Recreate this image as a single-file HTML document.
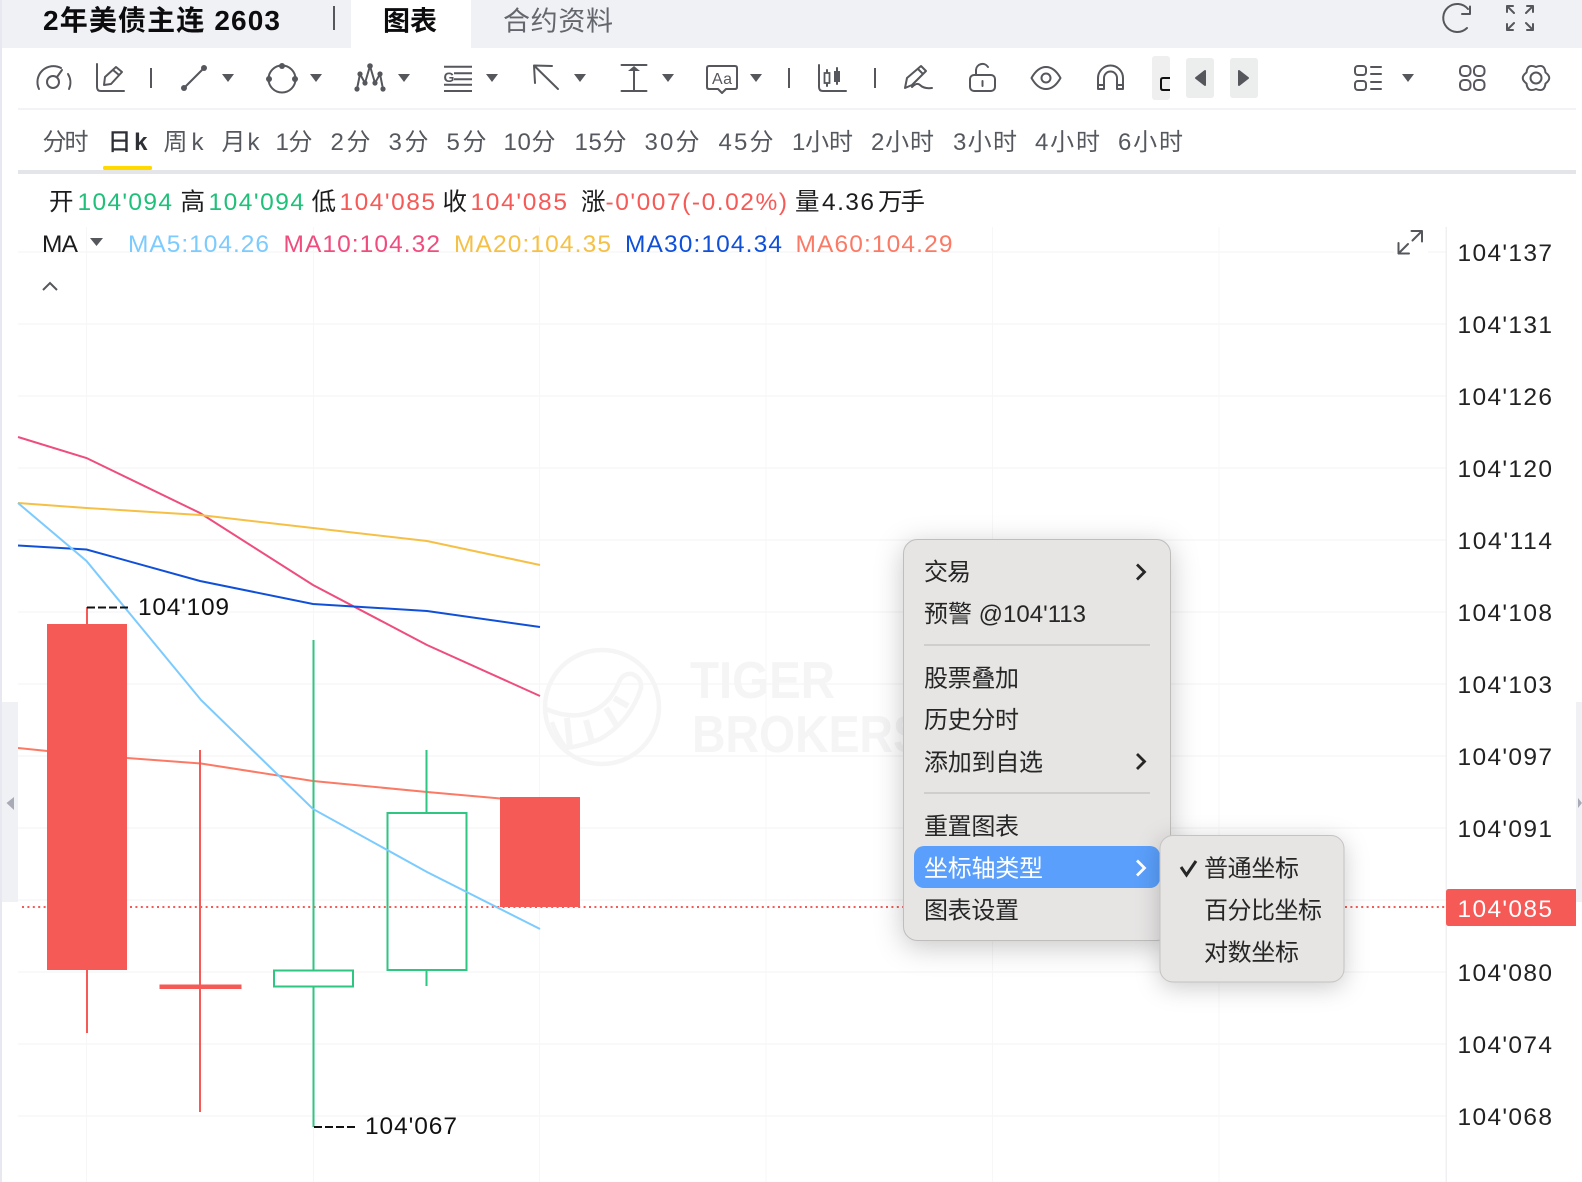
<!DOCTYPE html>
<html><head><meta charset="utf-8"><style>
html,body{margin:0;padding:0;background:#fff;width:1582px;height:1182px;overflow:hidden}
svg{display:block;position:absolute;left:0;top:0}
text{font-family:"Liberation Sans","Noto Sans CJK SC",sans-serif;font-size:24.5px;fill:#1c1c1e;white-space:pre}
.ic{fill:none;stroke:#55575c;stroke-width:2;stroke-linecap:round;stroke-linejoin:round}
.fl{fill:#55575c;stroke:none}
.p{fill:#55585e;font-size:24px}
.g{fill:#20c07a}.r{fill:#f55a57}
.ax{fill:#222}
.m{fill:#262626;font-size:24px}
</style></head><body>
<svg width="1582" height="1182" viewBox="0 0 1582 1182" xmlns="http://www.w3.org/2000/svg">
<rect width="1582" height="1182" fill="#fff"/>
<rect x="0" y="0" width="2" height="1182" fill="#e8e9f0"/>
<!-- tab bar -->
<rect x="2" y="0" width="1580" height="48" fill="#f0f1f5"/>
<rect x="351" y="0" width="120" height="48" fill="#fff"/>
<text x="43" y="30" font-weight="700" style="font-size:28px;fill:#0c0c0e" textLength="237">2年美债主连 2603</text>
<rect x="333" y="6" width="2" height="24" fill="#55575c"/>
<text x="383" y="30.500" font-weight="700" style="font-size:27px;fill:#0c0c0e" textLength="54">图表</text>
<text x="503" y="30.500" style="font-size:27px;fill:#63666c" textLength="110">合约资料</text>
<path class="ic" d="M1468 9A14 14 0 1 0 1467 28"/>
<path class="ic" d="M1470 6.500V14H1462"/>
<path class="ic" d="M1507 6V12M1507 6H1513M1507 6L1514 13M1533 6V12M1533 6H1527M1533 6L1526 13M1507 30V24M1507 30H1513M1507 30L1514 23M1533 30V24M1533 30H1527M1533 30L1526 23"/>
<!-- toolbar -->
<path class="ic" d="M39 89A16 16 0 0 1 61 68M68 74A16 16 0 0 1 69 89"/>
<circle class="ic" cx="53" cy="82" r="6"/>
<path class="ic" d="M57 77L62 70"/>
<path class="ic" d="M97 64V87Q97 91 101 91H124"/>
<path class="ic" d="M104 85L105 77L116 67L122 72L111 84Z M113 70L119 75"/>
<rect x="150" y="68" width="2" height="20" fill="#55575c"/>
<path class="ic" d="M184 88L204 68"/><circle class="fl" cx="184" cy="88" r="3"/><circle class="fl" cx="204" cy="68" r="3"/>
<path class="fl" d="M222 74H234L228 82Z"/>
<circle class="ic" cx="282" cy="79" r="13.500"/><circle class="fl" cx="282" cy="66" r="3"/><circle class="fl" cx="269" cy="79" r="3"/><circle class="fl" cx="295" cy="79" r="3"/>
<path class="fl" d="M310 74H322L316 82Z"/>
<path class="ic" d="M357 89L360 74L365 83L370 66L375 83L380 74L383 89"/>
<circle class="fl" cx="357" cy="89" r="2.600"/><circle class="fl" cx="360" cy="74" r="2.600"/><circle class="fl" cx="365" cy="83" r="2.600"/><circle class="fl" cx="370" cy="66" r="2.800"/><circle class="fl" cx="375" cy="83" r="2.600"/><circle class="fl" cx="380" cy="74" r="2.600"/><circle class="fl" cx="383" cy="89" r="2.600"/>
<path class="fl" d="M398 74H410L404 82Z"/>
<path d="M444 66.700H472M454 73.300H472M454 79.300H472M444 84.700H472M444 91H472" fill="none" stroke="#55575c" stroke-width="2"/>
<text x="443.500" y="82" style="font-size:14px;fill:#55575c" font-weight="700">G</text>
<path class="fl" d="M486 74H498L492 82Z"/>
<path class="ic" d="M552 66L534 65.500L535 83M534.500 66L558 89"/>
<path class="fl" d="M574 74H586L580 82Z"/>
<path class="ic" d="M621.500 65H646.500M621.500 91H646.500M634 70V91"/>
<path class="fl" d="M628 71L634 66L640 71Z"/>
<path class="fl" d="M662 74H674L668 82Z"/>
<path class="ic" d="M709 66H735Q737 66 737 68V87Q737 89 735 89H726L722 93L718 89H709Q707 89 707 87V68Q707 66 709 66Z"/>
<text x="712" y="84" style="font-size:16px;fill:#55575c" textLength="20">Aa</text>
<path class="fl" d="M750 74H762L756 82Z"/>
<rect x="788" y="68" width="2" height="20" fill="#55575c"/>
<path class="ic" d="M819 65V87Q819 91 823 91H846"/>
<path class="ic" d="M827 70V86"/><rect x="824.500" y="73" width="5" height="10" fill="#fff" stroke="#55575c" stroke-width="1.800"/>
<path class="ic" d="M837 68V84"/><rect x="834" y="71" width="6" height="11" fill="#55575c"/>
<rect x="874" y="68" width="2" height="20" fill="#55575c"/>
<path class="ic" d="M905 88L907 78L921 66L926 71L912 85ZM918 69L923 74"/>
<path class="ic" d="M912 87Q917 82 920 85Q924 89 932 88"/>
<rect class="ic" x="970" y="75" width="25" height="16" rx="4"/>
<path class="ic" d="M976 75V70A6.500 6.500 0 0 1 988 67M982.500 81V86"/>
<path class="ic" d="M1031.500 78C1036 70 1041 67 1046 67C1051 67 1056 70 1060.500 78C1056 86 1051 89 1046 89C1041 89 1036 86 1031.500 78Z"/>
<circle class="ic" cx="1046" cy="78" r="4.500"/>
<path class="ic" d="M1098 89V78A12.500 12.500 0 0 1 1123 78V89H1117V78A6.500 6.500 0 0 0 1104 78V89ZM1098 85H1104M1117 85H1123"/>
<rect x="1152" y="56" width="18" height="44" rx="3" fill="#efefef"/>
<rect x="1170" y="56" width="3" height="44" fill="#fff"/>
<path d="M1170 78H1163Q1161 78 1161 80V88Q1161 90 1163 90H1170" fill="none" stroke="#111" stroke-width="2"/>
<rect x="1186" y="58" width="28" height="40" rx="3" fill="#eceded"/>
<path class="ic" style="fill:#55575c" d="M1196 78L1205 71V85Z"/>
<rect x="1230" y="58" width="28" height="40" rx="3" fill="#eceded"/>
<path class="ic" style="fill:#55575c" d="M1248 78L1239 71V85Z"/>
<rect class="ic" x="1355" y="66" width="11" height="9" rx="3"/><rect class="ic" x="1355" y="81" width="11" height="9" rx="3"/>
<path class="ic" d="M1371 67H1381M1371 74H1381M1371 82H1381M1371 89H1381"/>
<path class="fl" d="M1402 74H1414L1408 82Z"/>
<rect class="ic" x="1460" y="66" width="10.500" height="10" rx="4"/><rect class="ic" x="1474" y="66" width="10.500" height="10" rx="4"/><rect class="ic" x="1460" y="80" width="10.500" height="10" rx="4"/><rect class="ic" x="1474" y="80" width="10.500" height="10" rx="4"/>
<path class="ic" d="M1536 67Q1544.500 63.300 1545.500 72.500Q1553 78 1545.500 83.500Q1544.500 92.700 1536 89Q1527.500 92.700 1526.500 83.500Q1519 78 1526.500 72.500Q1527.500 63.300 1536 67Z"/>
<circle class="ic" cx="1536" cy="78" r="5.500"/>
<rect x="18" y="108" width="1558" height="2" fill="#f2f2f7"/>
<!-- period row -->
<g>
<text class="p" x="42.500" y="150" textLength="46">分时</text>
<text class="p" x="107.500" y="150" textLength="40" style="fill:#2e3036;font-weight:500">日 <tspan font-weight="700">k</tspan></text>
<text class="p" x="163.500" y="150" textLength="40">周 k</text>
<text class="p" x="221.500" y="150" textLength="38">月 k</text>
<text class="p" x="275.500" y="150" textLength="37">1分</text>
<text class="p" x="330.500" y="150" textLength="40">2分</text>
<text class="p" x="388.500" y="150" textLength="40">3分</text>
<text class="p" x="446.500" y="150" textLength="40">5分</text>
<text class="p" x="503.500" y="150" textLength="52">10分</text>
<text class="p" x="574.500" y="150" textLength="52">15分</text>
<text class="p" x="644.500" y="150" textLength="55">30分</text>
<text class="p" x="718.500" y="150" textLength="55">45分</text>
<text class="p" x="792" y="150" textLength="61">1小时</text>
<text class="p" x="871" y="150" textLength="63">2小时</text>
<text class="p" x="953" y="150" textLength="64">3小时</text>
<text class="p" x="1035" y="150" textLength="65">4小时</text>
<text class="p" x="1118" y="150" textLength="65">6小时</text>
</g>
<rect x="103" y="166" width="49" height="4" rx="1.500" fill="#ffd900"/>
<rect x="18" y="170" width="1558" height="4" fill="#e4e5e9"/>
<!-- grid -->
<path d="M18 252H1446M18 324H1446M18 396H1446M18 468H1446M18 540H1446M18 612H1446M18 684H1446M18 756H1446M18 828H1446M18 900H1446M18 972H1446M18 1044H1446M18 1116H1446" stroke="#f7f7f8" stroke-width="1.500" fill="none"/>
<path d="M86.500 227V1182M313.500 227V1182M539.500 227V1182M766 227V1182M992.500 227V1182M1219 227V1182" stroke="#f7f7f8" stroke-width="1" fill="none"/>
<rect x="1445.500" y="227" width="1.500" height="955" fill="#f0f0f2"/>
<!-- watermark -->
<g fill="none" stroke="#f5f5f6" stroke-width="4.500">
<circle cx="602" cy="707" r="57"/>
<path d="M546 709Q585 726 610 698Q616 690 619 682Q623 673 632 674Q642 678 641 688Q630 722 600 739Q582 746 566 748Q556 735 552 722"/>
<path d="M567 718L570 748M586 720L592 742M606 708L618 728M614 698L628 706" stroke-width="6"/>
</g>
<text x="690" y="698" font-weight="700" style="font-size:52px;fill:#f5f5f6" textLength="145" lengthAdjust="spacingAndGlyphs">TIGER</text>
<text x="692" y="752" font-weight="700" style="font-size:52px;fill:#f5f5f6" textLength="232" lengthAdjust="spacingAndGlyphs">BROKERS</text>
<!-- ohlc -->
<text x="49" y="210">开</text><text class="g" x="77.500" y="210" textLength="94.500">104'094</text>
<text x="180.500" y="210">高</text><text class="g" x="208.500" y="210" textLength="95.500">104'094</text>
<text x="311.500" y="210">低</text><text class="r" x="339.500" y="210" textLength="95.500">104'085</text>
<text x="442.500" y="210">收</text><text class="r" x="470.500" y="210" textLength="96.500">104'085</text>
<text x="581" y="210">涨</text><text class="r" x="605.500" y="210" textLength="181.500">-0'007(-0.02%)</text>
<text x="795" y="210">量</text><text x="822" y="210" textLength="52">4.36</text><text x="878" y="210" textLength="47">万手</text>
<!-- MA row -->
<text x="42" y="252" textLength="36">MA</text>
<path class="fl" d="M90 238H103L96.500 246Z"/>
<text x="128" y="252" style="fill:#7ccbff" textLength="141">MA5:104.26</text>
<text x="283.500" y="252" style="fill:#ee4d7e" textLength="156.500">MA10:104.32</text>
<text x="454" y="252" style="fill:#f5c045" textLength="157">MA20:104.35</text>
<text x="625" y="252" style="fill:#1050d8" textLength="157">MA30:104.34</text>
<text x="795.500" y="252" style="fill:#fb7a66" textLength="157">MA60:104.29</text>
<path d="M43 290L50 283L57 290" fill="none" stroke="#55575c" stroke-width="2"/>
<rect x="1394" y="228" width="34" height="28" fill="#fff"/>
<path class="ic" d="M1398.500 243V253.500H1409M1398.500 253.500L1408 244M1411.500 231H1422V241.500M1422 231L1412.500 240.500"/>
<!-- dotted price line -->
<path d="M22 907H1446" stroke="#f55a57" stroke-width="2" stroke-dasharray="2 3.400" fill="none"/>
<!-- candles behind -->
<path d="M18 748L86.500 755L201 763.500L313 781L427 792L540 802" fill="none" stroke="#fb7a66" stroke-width="2"/>
<path d="M87 607V1033" stroke="#f55a57" stroke-width="2"/>
<rect x="47" y="624" width="80" height="346" fill="#f55a57"/>
<path d="M200 750V1112" stroke="#f55a57" stroke-width="2"/>
<rect x="159.500" y="984.500" width="82" height="4.500" fill="#f55a57"/>
<path d="M313.500 640V1127" stroke="#2ec680" stroke-width="2"/>
<rect x="274" y="970.500" width="79" height="16" fill="#fff" stroke="#2ec680" stroke-width="2"/>
<path d="M426.500 750V813M426.500 970V986" stroke="#2ec680" stroke-width="2"/>
<rect x="387.500" y="813" width="79" height="157" fill="none" stroke="#2ec680" stroke-width="2"/>
<rect x="500" y="797" width="80" height="110" fill="#f55a57"/>
<!-- MA lines -->
<path d="M18 437L86.500 458L200 513L313 585L427 645L540 696" fill="none" stroke="#ee4d7e" stroke-width="2"/>
<path d="M18 503L86.500 508L200 515L313 528L427 541L540 565" fill="none" stroke="#f5c045" stroke-width="2"/>
<path d="M18 545.500L86.500 549.500L200 581L313 604L427 611L540 627" fill="none" stroke="#1050d8" stroke-width="2"/>
<path d="M18 503L86.500 561L201 700L313 809L427 872L540 929" fill="none" stroke="#7ccbff" stroke-width="2"/>
<!-- hi/lo labels -->
<path d="M87 607.500H131" stroke="#111" stroke-width="2" stroke-dasharray="8 3" fill="none"/>
<text x="138" y="615" style="fill:#111" textLength="91">104'109</text>
<path d="M314 1127H358" stroke="#111" stroke-width="2" stroke-dasharray="8 3" fill="none"/>
<text x="365" y="1134" style="fill:#111" textLength="92">104'067</text>
<!-- handles -->
<rect x="2" y="702" width="16" height="200" fill="#f0f1f5"/>
<path d="M6.500 803L14 797V810Z" fill="#a8abb5"/>
<rect x="1576" y="702" width="6" height="200" fill="#f0f1f5"/>
<path d="M1582 803L1578 798V808Z" fill="#a8abb5"/>
<!-- axis labels -->
<g>
<text class="ax" x="1457.500" y="261" textLength="94.500">104'137</text>
<text class="ax" x="1457.500" y="333" textLength="94.500">104'131</text>
<text class="ax" x="1457.500" y="405" textLength="94.500">104'126</text>
<text class="ax" x="1457.500" y="477" textLength="94.500">104'120</text>
<text class="ax" x="1457.500" y="549" textLength="94.500">104'114</text>
<text class="ax" x="1457.500" y="621" textLength="94.500">104'108</text>
<text class="ax" x="1457.500" y="693" textLength="94.500">104'103</text>
<text class="ax" x="1457.500" y="765" textLength="94.500">104'097</text>
<text class="ax" x="1457.500" y="837" textLength="94.500">104'091</text>
<text class="ax" x="1457.500" y="981" textLength="94.500">104'080</text>
<text class="ax" x="1457.500" y="1053" textLength="94.500">104'074</text>
<text class="ax" x="1457.500" y="1125" textLength="94.500">104'068</text>
</g>
<path d="M1449 889H1576V926H1449Q1446 926 1446 923V892Q1446 889 1449 889Z" fill="#f55a57"/>
<text x="1457.500" y="917" style="fill:#fff" textLength="94.500">104'085</text>
<!-- context menu -->
<g style="filter:drop-shadow(0 6px 14px rgba(0,0,0,.22))">
<rect x="903.500" y="539.500" width="267" height="401" rx="14" fill="#e6e5e4" stroke="#bfbebd" stroke-width="1"/>
</g>
<rect x="914" y="846" width="246" height="42" rx="10" fill="#5a9ffb"/>
<rect x="924" y="644" width="226" height="2" fill="#cfcecd"/>
<rect x="924" y="792" width="226" height="2" fill="#cfcecd"/>
<text class="m" x="924" y="580" textLength="47">交易</text>
<text class="m" x="924" y="622" textLength="162">预警 @104'113</text>
<text class="m" x="924" y="686.500" textLength="95">股票叠加</text>
<text class="m" x="924" y="728" textLength="95">历史分时</text>
<text class="m" x="924" y="770.500" textLength="119">添加到自选</text>
<text class="m" x="924" y="834.500" textLength="95">重置图表</text>
<text class="m" style="fill:#fff" x="924" y="876.500" textLength="119">坐标轴类型</text>
<text class="m" x="924" y="918.500" textLength="95">图表设置</text>
<path d="M1137 564.500L1144.500 572L1137 579.500M1137 754L1144.500 761.500L1137 769" fill="none" stroke="#262626" stroke-width="2.800"/>
<path d="M1137 860.500L1144.500 868L1137 875.500" fill="none" stroke="#fff" stroke-width="2.800"/>
<g style="filter:drop-shadow(0 5px 12px rgba(0,0,0,.2))">
<rect x="1160" y="835.500" width="184" height="146.500" rx="13" fill="#e6e5e4" stroke="#c4c3c2" stroke-width="1"/>
</g>
<path d="M1181 867L1186.500 875L1196 861" fill="none" stroke="#262626" stroke-width="3"/>
<text class="m" x="1204" y="876.500" textLength="95">普通坐标</text>
<text class="m" x="1204" y="918.500" textLength="118">百分比坐标</text>
<text class="m" x="1204" y="960.500" textLength="95">对数坐标</text>
</svg>
</body></html>
